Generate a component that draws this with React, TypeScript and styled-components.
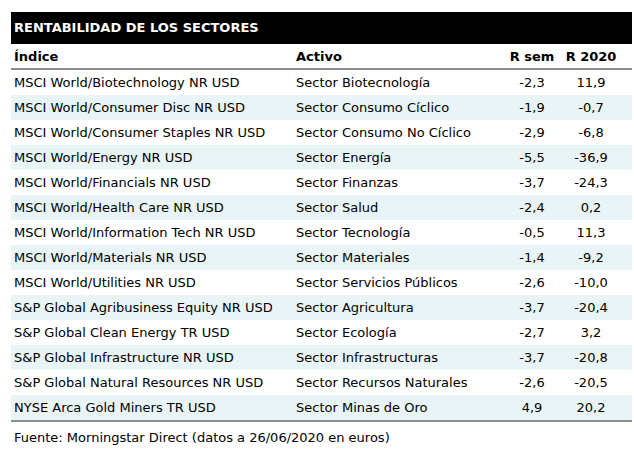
import React from 'react';
import styled, {createGlobalStyle} from 'styled-components';

const rows: [string, string, string, string][] = [
	['MSCI World/Biotechnology NR USD', 'Sector Biotecnología', '-2,3', '11,9'],
	['MSCI World/Consumer Disc NR USD', 'Sector Consumo Cíclico', '-1,9', '-0,7'],
	['MSCI World/Consumer Staples NR USD', 'Sector Consumo No Cíclico', '-2,9', '-6,8'],
	['MSCI World/Energy NR USD', 'Sector Energía', '-5,5', '-36,9'],
	['MSCI World/Financials NR USD', 'Sector Finanzas', '-3,7', '-24,3'],
	['MSCI World/Health Care NR USD', 'Sector Salud', '-2,4', '0,2'],
	['MSCI World/Information Tech NR USD', 'Sector Tecnología', '-0,5', '11,3'],
	['MSCI World/Materials NR USD', 'Sector Materiales', '-1,4', '-9,2'],
	['MSCI World/Utilities NR USD', 'Sector Servicios Públicos', '-2,6', '-10,0'],
	['S&P Global Agribusiness Equity NR USD', 'Sector Agricultura', '-3,7', '-20,4'],
	['S&P Global Clean Energy TR USD', 'Sector Ecología', '-2,7', '3,2'],
	['S&P Global Infrastructure NR USD', 'Sector Infrastructuras', '-3,7', '-20,8'],
	['S&P Global Natural Resources NR USD', 'Sector Recursos Naturales', '-2,6', '-20,5'],
	['NYSE Arca Gold Miners TR USD', 'Sector Minas de Oro', '4,9', '20,2'],
];

const GlobalStyle = createGlobalStyle`
	body {
		margin: 0;
		background: #fff;
		font-family: "DejaVu Sans", Verdana, sans-serif;
		color: #000;
	}
`;

const Page = styled.div`
	padding: 12px 2px 0 11px;
`;

const Title = styled.div`
	background: #000;
	color: #fff;
	font-weight: 700;
	font-size: 13px;
	height: 32px;
	line-height: 32px;
	padding-left: 3px;
`;

const Grid = styled.div`
	display: grid;
	grid-template-columns: 282px 210px 58px 60px 1fr;
`;

const HeadRow = styled(Grid)`
	height: 24px;
	align-items: center;
	font-weight: 700;
	font-size: 13px;
	border-bottom: 2px solid #8c8c8c;
`;

const Row = styled(Grid)<{$shade: boolean}>`
	height: 25px;
	align-items: center;
	font-size: 13px;
	background: ${p => (p.$shade ? '#e9f4f6' : '#fff')};
`;

const Cell = styled.div<{$num?: boolean}>`
	padding-left: ${p => (p.$num ? '0' : '3px')};
	text-align: ${p => (p.$num ? 'center' : 'left')};
	white-space: nowrap;
`;

const Body = styled.div`
	border-bottom: 2px solid #8c8c8c;
`;

const Source = styled.div`
	font-size: 13px;
	padding: 8px 0 0 3px;
`;

export default function App() {
	return (
		<>
			<GlobalStyle />
			<Page>
				<Title>RENTABILIDAD DE LOS SECTORES</Title>
				<HeadRow>
					<Cell>Índice</Cell>
					<Cell>Activo</Cell>
					<Cell $num>R sem</Cell>
					<Cell $num>R 2020</Cell>
				</HeadRow>
				<Body>
					{rows.map((r, i) => (
						<Row key={r[0]} $shade={i % 2 === 1}>
							<Cell>{r[0]}</Cell>
							<Cell>{r[1]}</Cell>
							<Cell $num>{r[2]}</Cell>
							<Cell $num>{r[3]}</Cell>
						</Row>
					))}
				</Body>
				<Source>Fuente: Morningstar Direct (datos a 26/06/2020 en euros)</Source>
			</Page>
		</>
	);
}
